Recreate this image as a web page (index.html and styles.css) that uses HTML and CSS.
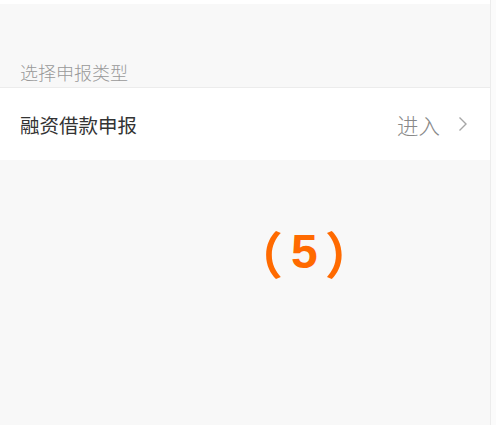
FILE: index.html
```html
<!DOCTYPE html>
<html lang="zh">
<head>
<meta charset="utf-8">
<link rel="stylesheet" href="styles.css">
</head>
<body>
<div class="page">
  <main class="main">
    <div class="topbar"></div>
    <div class="section-title">选择申报类型</div>
    <div class="row">
      <span class="row-label">融资借款申报</span>
      <span class="row-action">进入
        <svg class="chev" width="10" height="16" viewBox="0 0 10 16"><path d="M1.5 1.5 L8 8 L1.5 14.5" fill="none" stroke="#a6a6a6" stroke-width="1.4"/></svg>
      </span>
    </div>
    <div class="badge"><span class="paren">（</span><span class="num">5</span><span class="paren">）</span></div>
  </main>
  <div class="edge"></div>
</div>
</body>
</html>
```
FILE: styles.css
```css
html, body { margin: 0; padding: 0; }
body { font-family: "Noto Sans CJK SC", "Liberation Sans", sans-serif; background: #f8f8f8; }
.page { display: flex; height: 425px; }
.main { flex: 1; background: #f8f8f8; display: flex; flex-direction: column; }
.edge { width: 5px; background: #fbfbfb; border-left: 1px solid #ececec; }
.topbar { height: 4px; background: #fff; }
.section-title {
  margin-top: 53px;
  padding-left: 20px;
  height: 30px;
  font-size: 18px;
  font-weight: 300;
  line-height: 30px;
  color: #999;
  border-bottom: 1px solid #ececec;
}
.row {
  background: #fff;
  height: 72px;
  display: flex;
  align-items: center;
  justify-content: space-between;
  padding: 0 22px 0 20px;
}
.row-label { font-size: 19.5px; color: #333; font-weight: 400; }
.row-action { display: flex; align-items: center; gap: 18px; font-size: 21.5px; font-weight: 300; color: #888; }
.chev { display: block; }
.badge {
  margin-top: 64px;
  padding-left: 233px;
  display: flex;
  align-items: center;
  color: #ff6a00;
  height: 56px;
}
.paren { font-family: "Noto Sans CJK SC", sans-serif; font-size: 50px; font-weight: 700; line-height: 56px; }
.num { font-family: "Liberation Sans", sans-serif; font-weight: bold; font-size: 48px; line-height: 56px; margin: 0 7px 0 8px; }
```
